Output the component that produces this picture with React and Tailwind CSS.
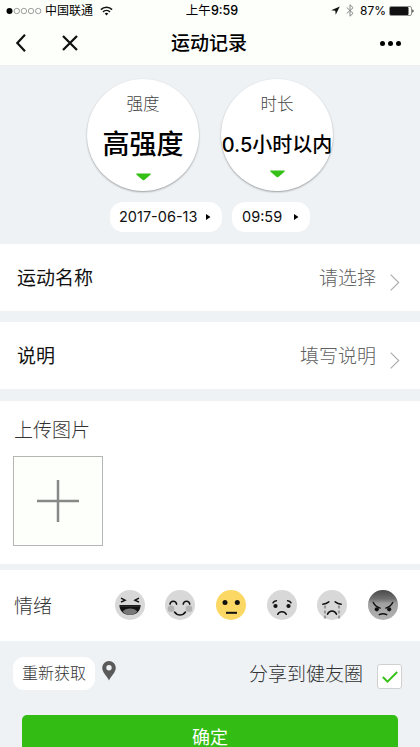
import React from "react";

function StatusBar() {
  return (
    <div className="flex h-5 items-center pl-[6px] pr-[6px] pt-px text-[12px] leading-5 text-black">
      <div className="flex flex-1 items-center">
        <svg width="36" height="8" viewBox="0 0 36 8" fill="none" stroke="#777" strokeWidth="0.7">
          <circle cx="3.5" cy="4" r="3" fill="#000" stroke="none" />
          <circle cx="10.8" cy="4" r="2.7" />
          <circle cx="17.9" cy="4" r="2.7" />
          <circle cx="25" cy="4" r="2.7" />
          <circle cx="32.2" cy="4" r="2.7" />
        </svg>
        <span className="ml-[3px] pt-px">中国联通</span>
        <svg className="ml-[7px]" width="13" height="10" viewBox="0 0 13 10" fill="none" stroke="#111" strokeWidth="1.5">
          <path d="M0.9 3.6a8 8 0 0 1 11.2 0" />
          <path d="M3 5.9a5 5 0 0 1 7 0" />
          <path d="M6.5 9.4L4.7 7.6a2.6 2.6 0 0 1 3.6 0z" fill="#111" stroke="none" />
        </svg>
      </div>
      <span className="pl-1 pt-px text-[12.5px]">上午<b className="font-medium">9:59</b></span>
      <div className="flex flex-1 items-center justify-end">
        <svg width="9" height="9" viewBox="0 0 9 9" fill="#111">
          <path d="M8.8 0.4L0.2 4.3l4.1 0.4 0.4 4.1z" />
        </svg>
        <svg className="ml-[6px]" width="8" height="13" viewBox="0 0 8 13" fill="none" stroke="#888" strokeWidth="1">
          <path d="M0.7 3.5l6.4 5.8L4 12.2V0.8l3.1 2.9L0.7 9.5" />
        </svg>
        <span className="ml-[6px] pt-px text-[12px]">87%</span>
        <svg className="ml-[3px]" width="25" height="10" viewBox="0 0 25 10">
          <rect x="0.5" y="0.5" width="22" height="9" rx="1.5" fill="none" stroke="#777" strokeWidth="0.8" />
          <rect x="1" y="1" width="18.5" height="8" rx="1" fill="#111" />
          <path d="M23.4 3.2a2 2 0 0 1 0 3.6z" fill="#111" />
        </svg>
      </div>
    </div>
  );
}

function NavBar() {
  return (
    <div className="flex h-[46px] items-center border-b border-[#eeeeee] px-4">
      <div className="flex flex-1 items-center">
        <svg width="10" height="18" viewBox="0 0 10 18" fill="none" stroke="#111" strokeWidth="2.2">
          <path d="M9 0.8L1.3 9 9 17.2" />
        </svg>
        <svg className="ml-9" width="16" height="16" viewBox="0 0 16 16" fill="none" stroke="#111" strokeWidth="2.3">
          <path d="M1 1l14 14M15 1L1 15" />
        </svg>
      </div>
      <h1 className="pl-px pt-[2px] text-[19px] font-medium leading-6 text-black">运动记录</h1>
      <div className="flex flex-1 items-center justify-end gap-[3px] pr-[3px] pt-px">
        <i className="size-[5px] rounded-full bg-black" />
        <i className="size-[5px] rounded-full bg-black" />
        <i className="size-[5px] rounded-full bg-black" />
      </div>
    </div>
  );
}

function Down({ className }) {
  return (
    <svg className={className} width="15" height="8" viewBox="0 0 15 8" fill="#35c017">
      <path d="M0.3 0.4h14.4v1.2L9 6.6q-1.5 1.3-3 0L0.3 1.6z" />
    </svg>
  );
}

function Dial({ label, children }) {
  return (
    <div className="flex size-[112px] flex-col items-center rounded-full bg-white pt-[15px] shadow-[0_1px_2px_rgba(0,0,0,0.35)]">
      <span className="text-[16.5px] font-light leading-5 text-[#444]">{label}</span>
      {children}
    </div>
  );
}

function TimePill({ text, gap }) {
  return (
    <button className={`flex h-[30px] items-center rounded-[13px] bg-white text-[14.5px] leading-5 text-[#111] ${gap}`}>
      <span>{text}</span>
      <svg width="5" height="6" viewBox="0 0 5 6" fill="#000">
        <path d="M0 0l4.5 3L0 6z" />
      </svg>
    </button>
  );
}

function Row({ label, value }) {
  return (
    <div className="flex h-[67px] items-center bg-white pl-[17px] pr-5 text-[19px] leading-6">
      <span className="flex-1 pt-[2px] text-[#111]">{label}</span>
      <span className="pt-[2px] font-light text-[#606060]">{value}</span>
      <svg className="ml-[14px] mt-[9px]" width="10" height="17" viewBox="0 0 10 17" fill="none" stroke="#aaa" strokeWidth="1.1">
        <path d="M0.7 0.6L8.7 8.5 0.7 16.4" />
      </svg>
    </div>
  );
}

function Face({ fill = "#d8d8d8", children }) {
  return (
    <svg width="30" height="30" viewBox="0 0 30 30" fill="none" stroke="#111" strokeWidth="1.5" strokeLinecap="round">
      <circle cx="15" cy="15" r="15" fill={fill} stroke="none" />
      {children}
    </svg>
  );
}

function Moods() {
  return (
    <div className="flex gap-[20.7px] pb-px">
      <Face>
        <path d="M6 8.2l4 2-4 2M24 8.2l-4 2 4 2" strokeLinecap="butt" />
        <path d="M4.4 15h21.2c0 6-4.3 10-10.6 10S4.4 21 4.4 15z" fill="#111" stroke="none" />
        <path d="M7.6 21.5q2.5-3 7.4-3t7.4 3Q19.5 25 15 25t-7.4-3.5z" fill="#777" stroke="none" />
        <path d="M5.5 16.2h19" stroke="#444" strokeWidth="0.8" />
      </Face>
      <Face>
        <circle cx="6" cy="18.8" r="3.3" fill="#b2b2b2" stroke="none" />
        <circle cx="24" cy="18.8" r="3.3" fill="#b2b2b2" stroke="none" />
        <path d="M5 14.2q0.5-3 3.3-3t3.3 3M18.2 14.2q0.5-3 3.3-3t3.3 3M9.5 22q2.2 3 5.5 3t5.5-3" />
      </Face>
      <Face fill="#fbd763">
        <circle cx="9" cy="12.5" r="2.5" fill="#111" stroke="none" />
        <circle cx="21.3" cy="12.5" r="2.5" fill="#111" stroke="none" />
        <path d="M10 22.8h11" strokeWidth="2" strokeLinecap="butt" />
      </Face>
      <Face>
        <circle cx="8.5" cy="16" r="2.1" fill="#111" stroke="none" />
        <circle cx="21.5" cy="16" r="2.1" fill="#111" stroke="none" />
        <path d="M6 12.8q1-1.9 3.4-2M20.6 10.8q2.4 0.1 3.4 2M10.7 24.3q1.3-2.5 4.3-2.5t4.3 2.5" />
      </Face>
      <Face>
        <path d="M8 15.5v14.5M22 15.5v14.5" stroke="#999" strokeWidth="2.2" strokeDasharray="3 2" strokeLinecap="butt" />
        <path d="M5.8 14.2q3.4-0.3 6-2.4M18.2 11.8q2.6 2.1 6 2.4M10.5 24.3q1.3-3.3 4.5-3.3t4.5 3.3" />
      </Face>
      <Face fill="url(#anger)">
        <defs>
          <linearGradient id="anger" x1="0" y1="0" x2="0" y2="1">
            <stop offset="0" stopColor="#484848" />
            <stop offset="0.3" stopColor="#707070" />
            <stop offset="0.45" stopColor="#a0a0a0" />
            <stop offset="1" stopColor="#b3b3b3" />
          </linearGradient>
        </defs>
        <circle cx="8.8" cy="19.3" r="2.1" fill="#111" stroke="none" />
        <circle cx="21.2" cy="19.3" r="2.1" fill="#111" stroke="none" />
        <path d="M5.3 12.5q2 4 6.8 5.6M24.7 12.5q-2 4-6.8 5.6M11.3 24.7q3.7-2 7.4 0" />
      </Face>
    </div>
  );
}

export default function App() {
  return (
    <div className="h-[747px] w-[420px] overflow-hidden bg-[#eef2f5] font-[Inter,'Noto_Sans_CJK_SC',sans-serif]">
      <header className="h-[66px] bg-[#fdfffb]">
        <StatusBar />
        <NavBar />
      </header>

      <section className="h-[178px] pt-[13px]">
        <div className="flex justify-center gap-[22px]">
          <Dial label="强度">
            <strong className="mt-[15px] whitespace-nowrap text-[27px] font-medium leading-8 text-black">高强度</strong>
            <Down className="mt-[12px]" />
          </Dial>
          <Dial label="时长">
            <strong className="mt-[15px] whitespace-nowrap text-[20px] font-medium leading-8 text-black">0.5小时以内</strong>
            <Down className="mt-[9px]" />
          </Dial>
        </div>
        <div className="mt-[11px] flex justify-center gap-[10px]">
          <TimePill text="2017-06-13" gap="w-[112px] justify-between pl-[9px] pr-[11px]" />
          <TimePill text="09:59" gap="w-[78px] justify-between pl-[10px] pr-[11px]" />
        </div>
      </section>

      <div className="flex flex-col gap-[11px]">
        <Row label="运动名称" value="请选择" />
        <Row label="说明" value="填写说明" />
      </div>

      <section className="mt-3 h-[163px] bg-white pl-[13px] pt-[18px]">
        <h2 className="pl-px text-[19px] font-light leading-6 text-[#333]">上传图片</h2>
        <button className="mt-[13px] flex size-[90px] items-center justify-center border border-[#b5b5b5] bg-[#fdfffa]">
          <svg width="42" height="42" viewBox="0 0 42 42" stroke="#888" strokeWidth="2.5">
            <path d="M21 0v42M0 21h42" />
          </svg>
        </button>
      </section>

      <section className="mt-[6px] flex h-[71px] items-center justify-between bg-white pl-[14px] pr-[22px]">
        <h2 className="pt-[3px] text-[19px] font-light leading-6 text-[#333]">情绪</h2>
        <Moods />
      </section>

      <section className="flex h-[74px] items-start pl-[13px] pr-[18px] pt-4">
        <button className="h-[33px] w-[82px] rounded-[11px] bg-white text-[16px] font-light leading-[33px] text-[#333]">重新获取</button>
        <svg className="ml-[7px] mt-1" width="14" height="20" viewBox="0 0 14 20" fill="#5a5a5a">
          <path fillRule="evenodd" d="M7 0a6.8 6.8 0 0 1 6.8 6.8C13.8 11.5 9 15 7 19.5 5 15 0.2 11.5 0.2 6.8A6.8 6.8 0 0 1 7 0zM7 4a2.7 2.7 0 1 0 0 5.4A2.7 2.7 0 0 0 7 4z" />
        </svg>
        <span className="ml-auto mt-[6px] text-[19px] font-light leading-6 text-[#333]">分享到健友圈</span>
        <span className="ml-[14px] mt-[7px] flex size-[25px] items-center justify-center rounded-[3px] border border-[#d0d0d0] bg-white">
          <svg width="16" height="12" viewBox="0 0 16 12" fill="none" stroke="#35c017" strokeWidth="1.9">
            <path d="M0.8 6l4.7 4.6L15.2 1" />
          </svg>
        </span>
      </section>

      <button className="mx-[22px] flex h-8 w-[376px] items-end justify-center rounded-t-[5px] bg-[#33bd14] text-[18px] leading-[18px] text-white">确定</button>
    </div>
  );
}
